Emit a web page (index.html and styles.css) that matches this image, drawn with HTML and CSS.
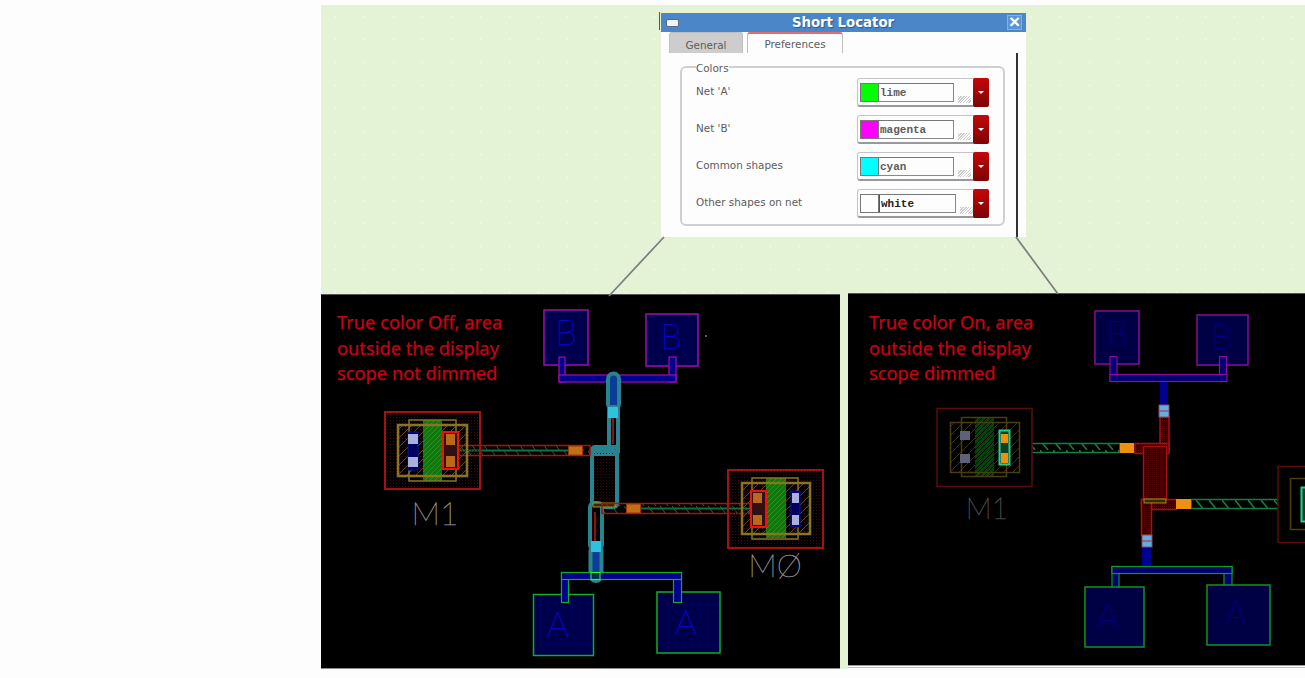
FILE: index.html
```html
<!DOCTYPE html>
<html lang="en">
<head>
  <meta charset="UTF-8" />
  <title>Short Locator</title>
  <link rel="stylesheet" href="styles.css">
</head>
<body>
  <figure class="figure">
    <div class="dialog">
      <div class="titlebar">
        <span class="win-btn"></span>
        <span class="title">Short Locator</span>
        <span class="close">×</span>
      </div>
      <div class="tabs">
        <span class="tab">General</span>
        <span class="tab tab-active">Preferences</span>
      </div>
      <div class="page">
        <fieldset class="group">
          <legend>Colors</legend>
          <div class="row">
            <span class="row-label">Net 'A'</span>
            <div class="combo">
              <span class="swatch lime"></span><span class="entry">lime</span><span class="grip"></span><span class="drop"></span>
            </div>
          </div>
          <div class="row">
            <span class="row-label">Net 'B'</span>
            <div class="combo">
              <span class="swatch magenta"></span><span class="entry">magenta</span><span class="grip"></span><span class="drop"></span>
            </div>
          </div>
          <div class="row">
            <span class="row-label">Common shapes</span>
            <div class="combo">
              <span class="swatch cyan"></span><span class="entry">cyan</span><span class="grip"></span><span class="drop"></span>
            </div>
          </div>
          <div class="row">
            <span class="row-label">Other shapes on net</span>
            <div class="combo combo-focus">
              <span class="swatch white"></span><span class="entry">white</span><span class="grip"></span><span class="drop"></span>
            </div>
          </div>
        </fieldset>
      </div>
    </div>

    <div class="panels">
      <!-- true color off -->
      <svg class="panel panel-off" viewBox="321 294 519 375" width="519" height="375">
        <defs>
          <pattern id="dots-blue" width="2" height="2" patternUnits="userSpaceOnUse"><rect width="1" height="1" fill="#000050"/><rect x="1" y="1" width="1" height="1" fill="#000020"/></pattern>
          <pattern id="dots-blue-on" width="2" height="2" patternUnits="userSpaceOnUse"><rect width="2" height="2" fill="#000014"/><rect width="1" height="1" fill="#000048"/><rect x="1" y="1" width="1" height="1" fill="#000038"/></pattern>
          <pattern id="dots-red" width="3" height="3" patternUnits="userSpaceOnUse"><rect width="1" height="1" fill="#400505"/></pattern>
          <pattern id="dots-red-on" width="2" height="2" patternUnits="userSpaceOnUse"><rect width="2" height="2" fill="#120202"/><rect width="1" height="1" fill="#500808"/></pattern>
          <pattern id="hatch-off" width="12" height="11" patternUnits="userSpaceOnUse"><path d="M0 0l8 11" stroke="#1c6a2c" stroke-width="1"/></pattern>
          <pattern id="hatch-on" width="13" height="10" patternUnits="userSpaceOnUse"><path d="M0 0l8 10" stroke="#14803c" stroke-width="1.500"/></pattern>
          <pattern id="hatch-olive" width="9" height="9" patternUnits="userSpaceOnUse"><path d="M0 9l9 -9" stroke="#5a4a10" stroke-width="1"/></pattern>
          <pattern id="hatch-olive-on" width="9" height="9" patternUnits="userSpaceOnUse"><path d="M0 9l9 -9" stroke="#3a3010" stroke-width="1"/></pattern>
          <pattern id="gate-off" width="5" height="5" patternUnits="userSpaceOnUse"><rect width="5" height="5" fill="#0a7a10"/><path d="M0 5l5 -5" stroke="#5a8a18" stroke-width="0.700"/></pattern>
          <pattern id="gate-on" width="5" height="5" patternUnits="userSpaceOnUse"><rect width="5" height="5" fill="#06400a"/><path d="M0 5l5 -5" stroke="#000" stroke-width="1"/></pattern>
        </defs>
        <rect x="321" y="294" width="519" height="375" fill="#000"/>
        <rect class="edge" x="321" y="294" width="519" height="1"/>
        <rect class="edge-low" x="321" y="668" width="519" height="1"/>
        <g class="note"><text x="337" y="329">True color Off, area</text><text x="337" y="355">outside the display</text><text x="337" y="380">scope not dimmed</text></g>

        <g class="pad-b"><rect x="544" y="310" width="44" height="55" fill="url(#dots-blue)"/><rect x="646" y="314" width="52" height="52" fill="url(#dots-blue)"/></g>
        <text class="pin" x="566" y="345">B</text><text class="pin" x="671" y="349">B</text>
        <g class="pad-b"><rect class="poly" x="559" y="357" width="6" height="25"/><rect class="poly" x="669" y="357" width="7" height="25"/><rect class="poly" x="559" y="375" width="117" height="7"/></g>

        <!-- highlighted net -->
        <g class="halo">
          <rect x="608" y="373.500" width="11" height="36" rx="5.500" fill="#0a3c98"/>
          <rect x="609" y="407" width="9" height="47" rx="3" fill="#000"/>
          <rect x="592" y="447" width="26" height="7" rx="3" fill="#000"/>
          <rect x="592" y="451" width="25" height="56" rx="3" fill="url(#dots-red)"/>
          <rect x="590" y="503" width="12" height="46" rx="4" fill="#000"/>
          <rect x="590.500" y="546" width="11" height="35" rx="5.500" fill="#0a3c98"/>
        </g>
        <path class="red-thin" d="M613 418v26M595 512v29"/>
        <rect class="via-c" x="608" y="407" width="10" height="11"/><rect class="via-c" x="591" y="541" width="10" height="11"/>
        <rect class="olive-bar" x="593" y="503" width="22" height="4"/>

        <g class="wire"><rect x="459" y="445.500" width="131" height="10" fill="url(#hatch-off)"/><path class="wire-mid" d="M459 450.500h109"/></g>
        <g class="wire"><rect x="602" y="503.500" width="148" height="10" fill="url(#hatch-off)"/><path class="wire-mid" d="M640 508.500h110"/></g>
        <rect class="via-o" x="568.500" y="446" width="14" height="9"/><rect class="via-o" x="626.500" y="504" width="14" height="9"/>

        <g class="pad-a"><rect x="533.500" y="594.500" width="60" height="61" fill="url(#dots-blue)"/><rect x="657" y="592" width="63" height="61" fill="url(#dots-blue)"/><rect class="poly" x="561.500" y="572.500" width="7" height="30"/><rect class="poly" x="673.500" y="572.500" width="8" height="30"/><rect class="poly" x="561.500" y="572.500" width="120" height="7"/></g>
        <text class="pin" x="558" y="637">A</text><text class="pin" x="686" y="635">A</text>
        <rect class="stub-a" x="591" y="572.500" width="9" height="7"/>

        <!-- M1 -->
        <rect class="dev-box" x="385" y="412" width="95" height="77" fill="url(#dots-red)"/>
        <rect x="397" y="424" width="71" height="53" fill="url(#hatch-olive)"/>
        <rect x="423" y="420" width="19" height="61" fill="url(#gate-off)"/>
        <rect class="diff" x="398" y="425" width="69" height="51" fill="none"/><rect class="diff-thin" x="409" y="420" width="47" height="61" fill="none"/>
        <rect class="con-b" x="408" y="432" width="10" height="38"/><rect class="sq" x="408" y="434" width="10" height="10"/><rect class="sq" x="408" y="457" width="10" height="10"/>
        <rect class="con-r" x="443" y="432" width="15" height="37"/><rect class="sq-o" x="446" y="434" width="9" height="11"/><rect class="sq-o" x="446" y="456" width="9" height="11"/>
        <text class="dev-label" x="435" y="525">M1</text>

        <!-- M0 -->
        <rect class="dev-box" x="728" y="470" width="95" height="78" fill="url(#dots-red)"/>
        <rect x="741" y="482" width="70" height="53" fill="url(#hatch-olive)"/>
        <rect x="766" y="478" width="20" height="60" fill="url(#gate-off)"/>
        <rect class="diff" x="742" y="483" width="68" height="51" fill="none"/><rect class="diff-thin" x="752" y="478" width="46" height="61" fill="none"/>
        <rect class="con-r" x="751" y="491" width="15" height="36"/><rect class="sq-o" x="753" y="493" width="9" height="10"/><rect class="sq-o" x="753" y="515" width="9" height="10"/>
        <rect class="con-b" x="791" y="491" width="9" height="36"/><rect class="sq" x="792" y="493" width="7" height="10"/><rect class="sq" x="792" y="515" width="7" height="10"/>
        <text class="dev-label" x="775" y="577">MØ</text>

        <circle cx="706" cy="336" r="0.800" fill="#ccc"/>
      </svg>

      <!-- true color on -->
      <div class="col-on">
        <svg class="panel" viewBox="848 293 457 372" width="457" height="372">
          <rect x="848" y="293" width="457" height="372" fill="#000"/>
          <rect class="edge" x="848" y="293" width="457" height="1"/>
          <g class="note"><text x="869" y="329">True color On, area</text><text x="869" y="355">outside the display</text><text x="869" y="380">scope dimmed</text></g>

          <g class="pad-b dim-pad"><rect x="1095" y="311" width="44" height="53" fill="url(#dots-blue-on)"/><rect x="1197" y="315" width="51" height="50" fill="url(#dots-blue-on)"/></g>
          <g class="pad-b dim-line"><rect class="poly" x="1110" y="356.500" width="7" height="25"/><rect class="poly" x="1219.500" y="356.500" width="7" height="25"/><rect class="poly" x="1110" y="374.500" width="117" height="7"/></g>
          <text class="pin pin-dim" x="1117" y="346">B</text><text class="pin pin-dim" x="1222" y="349">B</text>

          <rect class="metal" x="1160" y="382" width="8" height="23"/>
          <rect class="metal" x="1142" y="547" width="9" height="19"/>
          <rect class="red-fill" x="1160" y="417" width="9" height="35" fill="url(#dots-red-on)"/>
          <rect class="red-fill" x="1135" y="443.500" width="34" height="10" fill="url(#dots-red-on)"/>
          <rect class="red-fill" x="1143.500" y="446.500" width="23" height="57" fill="url(#dots-red-on)"/>
          <rect class="red-fill" x="1141.500" y="499.500" width="35" height="10" fill="url(#dots-red-on)"/>
          <rect class="red-fill" x="1141.500" y="499.500" width="10" height="36" fill="url(#dots-red-on)"/>
          <rect class="olive-bar" x="1144" y="499" width="22" height="4"/>
          <rect class="via-b" x="1159" y="405" width="10" height="12"/><rect class="via-b" x="1142" y="535" width="10" height="12"/>
          <path class="via-line" d="M1159 411h10M1142 541h10"/>

          <g class="wire-on"><rect x="1010" y="443.500" width="110" height="9" fill="url(#hatch-on)"/><rect x="1191" y="499.500" width="116" height="9" fill="url(#hatch-on)"/></g>
          <rect class="via-bright" x="1120" y="443" width="14" height="10"/><rect class="via-bright" x="1176" y="499" width="15" height="10"/>

          <g class="pad-a dim-line"><rect class="poly" x="1112" y="566.500" width="7" height="29"/><rect class="poly" x="1224" y="566.500" width="8" height="29"/><rect class="poly" x="1112" y="566.500" width="120" height="7"/></g>
          <g class="pad-a dim-pad"><rect x="1085" y="587" width="59" height="60" fill="url(#dots-blue-on)"/><rect x="1207" y="585" width="63" height="60" fill="url(#dots-blue-on)"/></g>
          <text class="pin pin-dim" x="1108" y="629">A</text><text class="pin pin-dim" x="1236" y="626">A</text>

          <!-- M1 -->
          <rect class="dim-box" x="937" y="408.500" width="95" height="78"/>
          <rect x="950" y="422" width="70" height="51" fill="url(#hatch-olive-on)"/>
          <rect x="975" y="417" width="19" height="60" fill="url(#gate-on)"/>
          <rect class="diff-dim" x="950.500" y="422.500" width="69" height="50" fill="none"/><rect class="diff-dim" x="961.500" y="417.500" width="45" height="59" fill="none"/>
          <rect class="sq-dim" x="960" y="431" width="10" height="9"/><rect class="sq-dim" x="960" y="454" width="10" height="9"/>
          <rect class="con-g" x="999.500" y="430.500" width="10" height="34"/><rect class="via-bright" x="1001" y="434" width="7" height="9"/><rect class="via-bright" x="1001" y="453" width="7" height="10"/>
          <text class="dev-label label-dim" x="987" y="519">M1</text>

          <!-- M0, runs off the edge -->
          <rect class="dim-box" x="1278" y="466.500" width="40" height="76"/>
          <rect class="diff-dim" x="1290.500" y="478.500" width="30" height="51" fill="none"/>
          <rect class="con-g" x="1301.500" y="487.500" width="10" height="34"/>
        </svg>
        <div class="panel-foot"></div>
      </div>
    </div>

    <svg class="leaders" viewBox="0 0 984 665" width="984" height="665">
      <path d="M343 232L288 291M695 232L737 289"/>
    </svg>
  </figure>
</body>
</html>
```

FILE: styles.css
```css
:root {
  --sheet: #e4f2d6;
  --title: #4a86c8;
  --label: #5c5c5c;
}

* {
  box-sizing: border-box;
}

body {
  margin: 0;
  height: 678px;
  overflow: hidden;
  background: #fdfdfd;
  font-family: "DejaVu Sans", sans-serif;
}

.figure {
  position: relative;
  margin: 5px 0 0 321px;
  width: 984px;
  height: 664px;
  background-color: var(--sheet);
  background-image: radial-gradient(circle, rgba(255, 255, 255, 0.6) 0.7px, transparent 1.1px);
  background-size: 29px 23px;
  display: flex;
  flex-direction: column;
}

/* dialog */
.dialog {
  position: relative;
  margin: 8px 0 0 340px;
  width: 365px;
  height: 224px;
  background: #fdfdfd;
  display: flex;
  flex-direction: column;
  flex: none;
}

.dialog::before {
  content: "";
  position: absolute;
  left: -2px;
  top: -1px;
  width: 1px;
  height: 18px;
  background: #3a5a88;
}

.titlebar {
  height: 19px;
  flex: none;
  display: flex;
  align-items: center;
  padding: 0 4px 0 5px;
  background: var(--title);
  color: #fff;
}

.win-btn {
  width: 13px;
  height: 8px;
  background: #f2f2f2;
  border: 1px solid #5a6a80;
  border-radius: 2px;
}

.title {
  flex: 1;
  text-align: center;
  font-size: 13.300px;
  font-weight: bold;
  text-shadow: 1px 1px 1px #2b5a90;
}

.close {
  width: 15px;
  height: 15px;
  background: #5a94d4;
  border: 1px solid #88b0dc;
  font-family: "Liberation Sans", sans-serif;
  font-size: 19px;
  font-weight: bold;
  line-height: 12px;
  text-align: center;
}

.tabs {
  display: flex;
  gap: 4px;
  height: 21px;
  padding-left: 8px;
  flex: none;
}

.tab {
  width: 74px;
  border: 1px solid #c0c0c0;
  border-bottom: none;
  border-radius: 3px 3px 0 0;
  background: #cdcdcd;
  color: #5c5c5c;
  font-size: 10.400px;
  line-height: 25px;
  text-align: center;
}

.tab-active {
  width: 96px;
  background: #fdfdfd;
  border-top: 2px solid #e86a6a;
  line-height: 20px;
}

.page {
  flex: 1;
  width: 357px;
  padding: 9px 0 0 19px;
  border-right: 2px solid #333;
}

.group {
  margin: 0;
  width: 325px;
  height: 164px;
  padding: 0 14px 0 14px;
  border: 2px solid #cfcfcf;
  border-radius: 6px;
  display: flex;
  flex-direction: column;
}

.group legend {
  position: relative;
  top: 1px;
  padding: 0;
  color: var(--label);
  font-size: 10.400px;
  line-height: 10px;
}

.row {
  display: flex;
  align-items: center;
  justify-content: space-between;
  height: 37px;
  color: var(--label);
  font-size: 10.400px;
}

.row:first-of-type {
  margin-top: 2px;
}

.row-label {
  padding-bottom: 3px;
}

.combo {
  width: 132px;
  height: 29px;
  padding: 4px 0 0 2px;
  display: flex;
  border: 1px solid #c4c4c4;
  border-bottom: 2px solid #999;
  border-radius: 3px;
  position: relative;
}

.swatch {
  width: 19px;
  height: 19px;
  border: 1px solid #777;
  flex: none;
}

.lime { background: #0f0; }
.magenta { background: #f0f; }
.cyan { background: #0ff; }
.white { background: #fdfdfd; }

.entry {
  width: 75px;
  height: 19px;
  padding-left: 1px;
  border: 1px solid #888;
  border-top-color: #777;
  border-left: none;
  background: #fdfdfd;
  color: #5c5c5c;
  font-family: "Liberation Mono", monospace;
  font-size: 11px;
  font-weight: bold;
  line-height: 19px;
}

.combo-focus .entry {
  width: 77px;
  color: #222;
  border-left: 1px solid #555;
}

.grip {
  width: 13px;
  height: 7px;
  margin: 13px 0 0 4px;
  background: repeating-linear-gradient(135deg, #ccc 0 1px, #fdfdfd 1px 2px);
}

.drop {
  position: absolute;
  right: -1px;
  top: -1px;
  width: 16px;
  height: 29px;
  border-radius: 2px;
  background: linear-gradient(#c40808, #7c0404);
}

.drop::after {
  content: "";
  position: absolute;
  left: 5px;
  top: 13px;
  border: 3px solid transparent;
  border-top: 3px solid #fff;
  border-bottom: none;
}

/* layout panels */
.panels {
  margin-top: 56px;
  display: flex;
  align-items: flex-start;
  gap: 8px;
  flex: none;
}

.panel {
  display: block;
  flex: none;
}

.panel-off {
  margin-top: 1px;
}

.col-on {
  background: #fdfdfd;
}

.panel-foot {
  height: 5px;
  background: linear-gradient(#9a9a9a 0 1px, #fdfdfd 1px 2px, #bdbdbd 2px 3px, #fdfdfd 3px);
}

.edge {
  fill: #555;
}

.edge-low {
  fill: #8a8a8a;
}

.note text {
  fill: #cc0010;
  stroke: #cc0010;
  stroke-width: 0.250;
  font-family: "Noto Sans", sans-serif;
  font-size: 18.300px;
}

.pad-b rect,
.pad-a rect {
  stroke-width: 1.500;
}

.pad-b rect {
  stroke: #a010a8;
}

.pad-a rect {
  stroke: #10b020;
}

.pad-b .poly,
.pad-a .poly {
  fill: #000090;
  stroke-width: 1.200;
}

.dim-line .poly {
  fill: #000070;
  stroke-opacity: 0.850;
}

.dim-pad rect {
  stroke-opacity: 0.850;
}

.stub-a {
  fill: #003050;
  stroke: #30ff30;
}

.pin {
  fill: #0808c0;
  stroke: #0808c0;
  stroke-width: 0.600;
  font-family: "Lato", sans-serif;
  font-weight: 100;
  font-size: 35px;
  text-anchor: middle;
}

.pin-dim {
  fill: #00007c;
  stroke: #00007c;
}

.halo rect {
  stroke: #2a8490;
  stroke-width: 4;
  filter: blur(0.5px);
}

.red-thin {
  fill: none;
  stroke: #901010;
  stroke-width: 2;
}

.via-c {
  fill: #30c0e0;
}

.olive-bar {
  fill: #382808;
  stroke: #a89020;
}

.wire rect {
  stroke: #b01010;
  stroke-width: 1.500;
}

.wire-mid {
  stroke: #107040;
  stroke-width: 2;
}

.via-o {
  fill: #c07010;
  stroke: #a03010;
}

.dev-box {
  stroke: #a81010;
  stroke-width: 2;
}

.diff {
  stroke: #8a7420;
  stroke-width: 2.500;
}

.diff-thin {
  stroke: #8a7420;
  stroke-width: 1.500;
}

.con-b {
  fill: #000060;
  stroke: #1010a0;
}

.sq {
  fill: #aab0dd;
}

.con-r {
  fill: #301010;
  stroke: #f01010;
  stroke-width: 2;
}

.sq-o {
  fill: #b86a18;
}

.dev-label {
  fill: #8c8c8c;
  stroke: #8c8c8c;
  stroke-width: 0.500;
  font-family: "Lato", sans-serif;
  font-weight: 100;
  font-size: 32px;
  text-anchor: middle;
}

.label-dim {
  fill: #4e4e4e;
  stroke: #4e4e4e;
  font-size: 29px;
}

.metal {
  fill: #000090;
}

.red-fill {
  stroke: #a81010;
  stroke-width: 1.500;
}

.via-b {
  fill: #60b0e8;
  stroke: #90485c;
}

.via-line {
  stroke: #a05060;
  stroke-width: 1.500;
}

.wire-on rect {
  stroke: #108040;
  stroke-width: 1.500;
}

.via-bright {
  fill: #f09010;
}

.dim-box {
  fill: #000;
  stroke: #5c0c0c;
  stroke-width: 1.500;
}

.diff-dim {
  stroke: #4a3e10;
  stroke-width: 1.500;
}

.sq-dim {
  fill: #606078;
}

.con-g {
  fill: #104020;
  stroke: #20d090;
  stroke-width: 2;
}

/* lines from the dialog down to the panels */
.leaders {
  position: absolute;
  left: 0;
  top: 0;
  pointer-events: none;
}

.leaders path {
  fill: none;
  stroke: #7c7c7c;
  stroke-width: 1.700;
}
```
